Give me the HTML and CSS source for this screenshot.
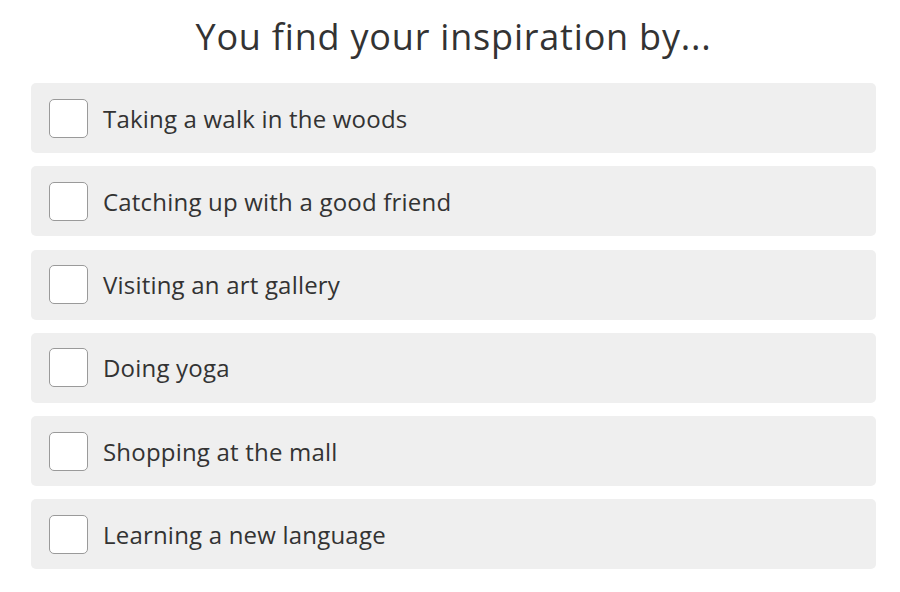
FILE: index.html
```html
<!DOCTYPE html>
<html lang="en">
<head>
    <meta charset="UTF-8">
    <meta name="viewport" content="width=device-width, initial-scale=1.0">
    <title>Inspiration Quiz</title>
    <link rel="stylesheet" href="styles.css">
</head>
<body>

    <div class="quiz">
        <h1>You find your inspiration by...</h1>

        <!-- Answer options -->
        <ul class="options">
            <li class="option"><span class="box"></span><span class="label">Taking a walk in the woods</span></li>
            <li class="option"><span class="box"></span><span class="label">Catching up with a good friend</span></li>
            <li class="option"><span class="box"></span><span class="label">Visiting an art gallery</span></li>
            <li class="option"><span class="box"></span><span class="label">Doing yoga</span></li>
            <li class="option"><span class="box"></span><span class="label">Shopping at the mall</span></li>
            <li class="option"><span class="box"></span><span class="label">Learning a new language</span></li>
        </ul>
    </div>

</body>
</html>
```

FILE: styles.css
```css
body {
    margin: 0;
    background-color: #fff;
    font-family: "Open Sans", "Noto Sans", sans-serif;
    color: #333;
    font-variant-ligatures: none;
}

.quiz {
    width: 845px;
    margin-left: 31px;
}

/* Question heading */
h1 {
    margin: 0;
    padding-top: 13px;
    height: 83px;
    box-sizing: border-box;
    text-align: center;
    font-size: 36px;
    font-weight: 400;
    line-height: 48px;
    letter-spacing: 0.8px;
    color: #333;
}

/* Options list */
.options {
    list-style: none;
    margin: 0;
    padding: 0;
    display: flex;
    flex-direction: column;
    gap: 13.3px;
}

.option {
    display: flex;
    align-items: center;
    height: 70px;
    padding-left: 18px;
    background-color: #efefef;
    border-radius: 5px;
}

.box {
    width: 37px;
    height: 37px;
    background-color: #fff;
    border: 1px solid #9a9a9a;
    border-radius: 5px;
    margin-right: 15px;
}

.label {
    font-size: 24px;
    letter-spacing: 0.2px;
    color: #333;
}
```
